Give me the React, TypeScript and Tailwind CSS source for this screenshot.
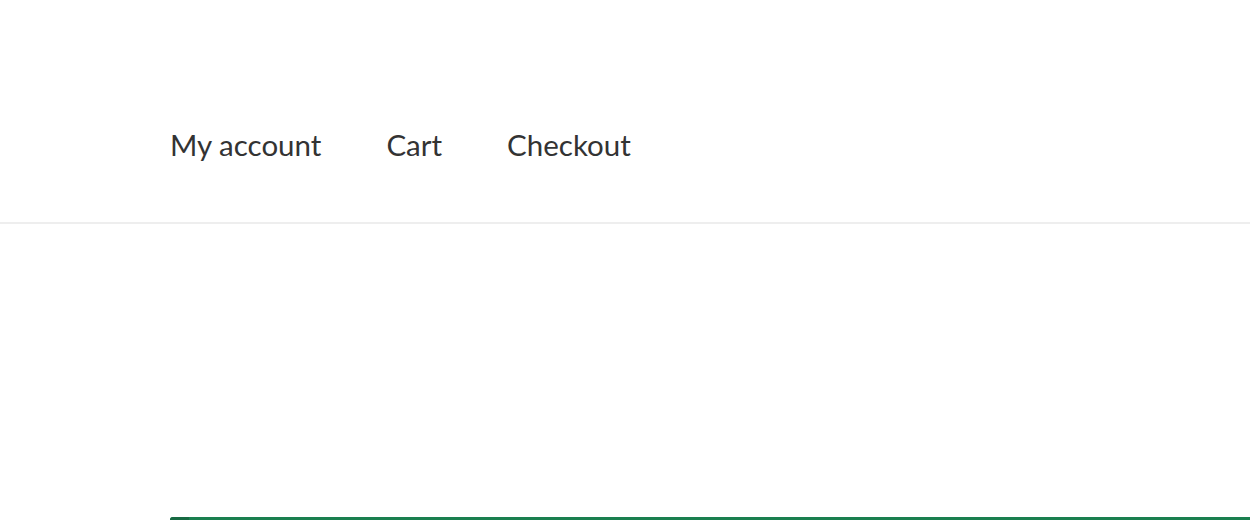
export default function App() {
  const links = ["My account", "Cart", "Checkout"]
  return (
    <div className="min-h-[520px] bg-white" style={{ fontFamily: '"Source Sans Pro", Lato, "Noto Sans", sans-serif' }}>
      <header className="border-b-2 border-[#eeeeee]">
        <nav className="flex h-[222px] items-center gap-[65px] pl-[170px] pt-[70px] pb-[2px]">
          {links.map((l) => (
            <a key={l} href="#" className="text-[29.5px] leading-none text-[#333333]">
              {l}
            </a>
          ))}
        </nav>
      </header>
      <main className="pl-[170px] pt-[293px]">
        <div className="flex h-[10px] overflow-hidden rounded-tl-[3px] bg-[#1a7f4f]">
          <span className="w-[19px] bg-[#176a43]" />
        </div>
      </main>
    </div>
  )
}
